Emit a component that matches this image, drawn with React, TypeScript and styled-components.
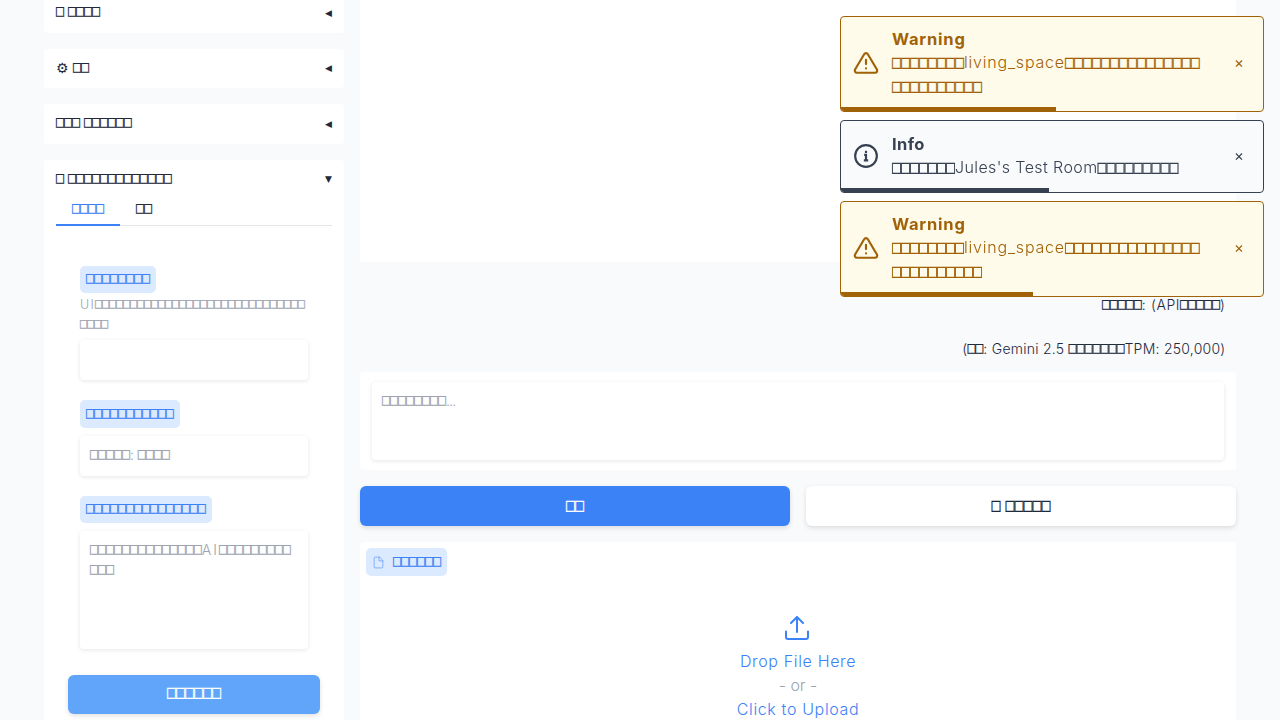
import React from "react";
import styled, { createGlobalStyle, css } from "styled-components";

const GlobalStyle = createGlobalStyle`
  * { box-sizing: border-box; }
  body {
    margin: 0;
    height: 720px;
    overflow: hidden;
    background: #f9fafc;
    color: #1e293b;
    font: 300 14px/20px Inter, sans-serif;
  }
`;

/* ---------- text ---------- */

const Glyphs = styled.span<{ $advance: number }>`
  display: inline-block;
  height: 10px;
  font-family: "DejaVu Sans Mono", monospace;
  font-weight: 400;
  font-size: ${(p) => p.$advance * 1.661}px;
  line-height: 10px;
  letter-spacing: 0;
  transform: translateY(-1.7px) scaleY(1.24);
  -webkit-text-stroke: 0.2px currentColor;
`;

const Label = ({ text, advance = 8 }: { text: string; advance?: number }) => (
  <>
    {text.split(/(□+)/).map((part, i) =>
      part.startsWith("□") ? (
        <Glyphs key={i} $advance={advance}>
          {part}
        </Glyphs>
      ) : (
        part
      )
    )}
  </>
);

/* ---------- page ---------- */

const Page = styled.div`
  display: flex;
  gap: 16px;
  height: 720px;
  padding: 0 44px;
  overflow: hidden;
`;

const Sidebar = styled.aside`
  display: flex;
  flex-direction: column;
  gap: 16px;
  width: 300px;
  flex: none;
  margin-top: -6.75px;
`;

const Card = styled.section<{ $open?: boolean }>`
  flex: none;
  height: ${(p) => (p.$open ? "600px" : "39.5px")};
  padding: 9px 12px;
  border-radius: 4px;
  background: #fff;
`;

const CardHeader = styled.header`
  display: flex;
  justify-content: space-between;
  align-items: center;
  height: 20px;
`;

const Caret = styled.span`
  padding-top: 1px;
  font: 9px/20px "DejaVu Sans", sans-serif;
`;

const Tabs = styled.nav`
  display: flex;
  height: 37px;
  border-bottom: 1px solid #e5e7eb;
`;

const Tab = styled.div<{ $active?: boolean }>`
  height: 37px;
  padding: 10px 16px 0;
  ${(p) =>
    p.$active &&
    css`
      color: #3b82f6;
      border-bottom: 2px solid #3b82f6;
    `}
`;

const Form = styled.div`
  display: flex;
  flex-direction: column;
  align-items: flex-start;
  padding: 40px 24px 0;
`;

const Tag = styled.div<{ $height?: number }>`
  display: inline-flex;
  align-items: center;
  gap: 8px;
  height: ${(p) => p.$height ?? 27}px;
  padding: 0 6px;
  border-radius: 5px;
  background: #dbeafe;
  color: #3b82f6;
`;

const Hint = styled.div`
  width: 228px;
  margin: 2px 0 5px;
  color: #9ca3af;
  font-size: 12.5px;
  letter-spacing: 1.3px;
  white-space: nowrap;
`;

const Field = styled.div<{ $height: number; $gap?: number; $tracking?: number }>`
  width: 100%;
  height: ${(p) => p.$height}px;
  margin-bottom: ${(p) => p.$gap ?? 0}px;
  padding: 9px 10px;
  border-radius: 4px;
  background: #fff;
  color: #9ca3af;
  box-shadow: 0 1px 4px rgba(0, 0, 0, 0.1);
  letter-spacing: ${(p) => p.$tracking ?? 0}px;
  white-space: nowrap;
`;

const FieldSlot = styled.div`
  width: 100%;
  margin-top: 8px;
`;

const Button = styled.button<{ $tone: "primary" | "soft" | "plain" }>`
  flex: 1;
  height: 40px;
  padding: 0;
  border: 0;
  border-radius: 6px;
  font: inherit;
  word-spacing: 1px;
  background: ${(p) => ({ primary: "#3b82f6", soft: "#60a5fa", plain: "#fff" })[p.$tone]};
  color: ${(p) => (p.$tone === "plain" ? "#1e293b" : "#fff")};
  box-shadow: 0 2px 5px rgba(0, 0, 0, 0.12);
`;

const SaveRow = styled.div`
  display: flex;
  height: 39px;
  margin: 26px 12px 0;
  ${Button} {
    height: 39px;
  }
`;

const Main = styled.main`
  display: flex;
  flex-direction: column;
  flex: 1;
`;

const Chat = styled.div`
  height: 262px;
  flex: none;
  background: #fff;
`;

const Note = styled.p<{ $top: number; $tracking: number }>`
  margin: ${(p) => p.$top}px 10.5px 0 0;
  height: 20px;
  text-align: right;
  letter-spacing: ${(p) => p.$tracking}px;
`;

const Composer = styled.div`
  margin-top: 13px;
  height: 98px;
  flex: none;
  padding: 10px 12px;
  border-radius: 4px;
  background: #fff;
`;

const Actions = styled.div`
  display: flex;
  gap: 16px;
  margin: 16px 0;
`;

const Upload = styled.section`
  height: 240px;
  flex: none;
  padding: 6px;
  border-radius: 4px;
  background: #fff;
`;

const DropText = styled.div`
  display: flex;
  flex-direction: column;
  align-items: center;
  margin-top: 40px;
  color: #3b82f6;
  font-size: 16px;
  line-height: 24px;
  letter-spacing: 0.65px;
  svg {
    margin: 0 3px 9px 0;
  }
`;

const Or = styled.span`
  color: #9ca3af;
  letter-spacing: 0;
`;

/* ---------- toasts ---------- */

const ToastStack = styled.div`
  position: fixed;
  top: 16px;
  right: 16px;
  width: 424px;
  display: flex;
  flex-direction: column;
  gap: 8px;
`;

const ToastBox = styled.div<{ $kind: "warning" | "info" }>`
  position: relative;
  display: flex;
  align-items: center;
  height: ${(p) => (p.$kind === "info" ? 73 : 96)}px;
  padding: 0 18px 2px 12px;
  overflow: hidden;
  border: 1px solid currentColor;
  border-radius: 4px;
  color: ${(p) => (p.$kind === "info" ? "#374151" : "#a16207")};
  background: ${(p) => (p.$kind === "info" ? "#f9fafc" : "#fffbeb")};
  letter-spacing: ${(p) => (p.$kind === "info" ? 0.4 : 0.8)}px;
  svg {
    flex: none;
  }
`;

const ToastText = styled.div`
  flex: 1;
  margin: -1px 0 0 13px;
  font-size: 16px;
  line-height: 24px;
  white-space: nowrap;
`;

const ToastTitle = styled.div`
  height: 23px;
  font-weight: 700;
  font-size: 16.5px;
`;

const Close = styled.span`
  width: 12px;
  text-align: center;
  font: 400 15px/20px Inter, sans-serif;
  letter-spacing: 0;
`;

const Progress = styled.div`
  position: absolute;
  left: 0;
  bottom: 0;
  height: 4px;
  background: currentColor;
`;

const WarningIcon = () => (
  <svg width="26" height="26" viewBox="0 0 24 24" fill="none" stroke="currentColor" strokeWidth="2" strokeLinecap="round" strokeLinejoin="round">
    <path d="M10.3 3.9 1.9 18a2 2 0 0 0 1.7 3h16.8a2 2 0 0 0 1.7-3L13.7 3.9a2 2 0 0 0-3.4 0Z" />
    <path d="M12 9v4M12 17h.01" />
  </svg>
);

const InfoIcon = () => (
  <svg width="26" height="26" viewBox="0 0 24 24" fill="none" stroke="currentColor" strokeWidth="2">
    <circle cx="12" cy="12" r="10" />
    <path d="M10.3 11H12v5M10 16h4M12 7.2v2" />
  </svg>
);

const FileIcon = () => (
  <svg width="13" height="13" viewBox="0 0 24 24" fill="none" stroke="#3b82f6" strokeOpacity="0.55" strokeWidth="1.8" strokeLinecap="round" strokeLinejoin="round">
    <path d="M13 2H6a2 2 0 0 0-2 2v16a2 2 0 0 0 2 2h12a2 2 0 0 0 2-2V9z" />
    <path d="M13 2v7h7" />
  </svg>
);

const UploadIcon = () => (
  <svg width="24" height="24" viewBox="0 0 24 24" fill="none" stroke="currentColor" strokeWidth="2" strokeLinecap="round" strokeLinejoin="round">
    <path d="M23 15.5V21a2 2 0 0 1-2 2H3a2 2 0 0 1-2-2v-5.5" />
    <path d="m18 7-6-6-6 6M12 1v15" />
  </svg>
);

interface ToastProps {
  kind: "warning" | "info";
  title: string;
  lines: string[];
  progress: number;
}

const Toast = ({ kind, title, lines, progress }: ToastProps) => (
  <ToastBox $kind={kind}>
    {kind === "info" ? <InfoIcon /> : <WarningIcon />}
    <ToastText>
      <ToastTitle>{title}</ToastTitle>
      {lines.map((line) => (
        <div key={line}>
          <Label text={line} advance={9} />
        </div>
      ))}
    </ToastText>
    <Close>×</Close>
    <Progress style={{ width: progress }} />
  </ToastBox>
);

const warningLines = ["□□□□□□□□living_space□□□□□□□□□□□□□□□", "□□□□□□□□□□"];

export default function App() {
  return (
    <>
      <GlobalStyle />
      <Page>
        <Sidebar>
          {["□ □□□□", "⚙ □□", "□□□ □□□□□□"].map((title) => (
            <Card key={title}>
              <CardHeader>
                <span>
                  <Label text={title} />
                </span>
                <Caret>◀</Caret>
              </CardHeader>
            </Card>
          ))}
          <Card $open>
            <CardHeader>
              <span>
                <Label text="□ □□□□□□□□□□□□□" />
              </span>
              <Caret>▼</Caret>
            </CardHeader>
            <Tabs>
              <Tab $active>
                <Label text="□□□□" />
              </Tab>
              <Tab>
                <Label text="□□" />
              </Tab>
            </Tabs>
            <Form>
              <Tag>
                <span>
                  <Label text="□□□□□□□□" />
                </span>
              </Tag>
              <Hint>
                <Label text={"UI" + "□".repeat(30)} advance={7} />
                <br />
                <Label text="□□□□" advance={7} />
              </Hint>
              <Field $height={40} $gap={20} />
              <Tag $height={28}>
                <span>
                  <Label text="□□□□□□□□□□□" />
                </span>
              </Tag>
              <FieldSlot>
                <Field $height={40} $gap={20}>
                  <Label text="□□□□□: □□□□" />
                </Field>
              </FieldSlot>
              <Tag>
                <span>
                  <Label text="□□□□□□□□□□□□□□□" />
                </span>
              </Tag>
              <FieldSlot>
                <Field $height={118} $tracking={2}>
                  <Label text="□□□□□□□□□□□□□□AI□□□□□□□□□" />
                  <br />
                  <Label text="□□□" />
                </Field>
              </FieldSlot>
            </Form>
            <SaveRow>
              <Button $tone="soft">
                <Label text="□□□□□□" advance={9} />
              </Button>
            </SaveRow>
          </Card>
        </Sidebar>
        <Main>
          <Chat />
          <Note $top={33} $tracking={0.6}>
            <Label text="□□□□□: (API□□□□□)" />
          </Note>
          <Note $top={24} $tracking={0.25}>
            <Label text="(□□: Gemini 2.5 □□□□□□□TPM: 250,000)" />
          </Note>
          <Composer>
            <Field $height={78} $tracking={-0.8}>
              <Label text="□□□□□□□□..." />
            </Field>
          </Composer>
          <Actions>
            <Button $tone="primary">
              <Label text="□□" advance={9} />
            </Button>
            <Button $tone="plain">
              <Label text="□ □□□□□" advance={9} />
            </Button>
          </Actions>
          <Upload>
            <Tag $height={28}>
              <FileIcon />
              <span>
                <Label text="□□□□□□" />
              </span>
            </Tag>
            <DropText>
              <UploadIcon />
              <span>Drop File Here</span>
              <Or>- or -</Or>
              <span>Click to Upload</span>
            </DropText>
          </Upload>
        </Main>
      </Page>
      <ToastStack>
        <Toast kind="warning" title="Warning" lines={warningLines} progress={215} />
        <Toast kind="info" title="Info" lines={["□□□□□□□Jules's Test Room□□□□□□□□□"]} progress={208} />
        <Toast kind="warning" title="Warning" lines={warningLines} progress={192} />
      </ToastStack>
    </>
  );
}
